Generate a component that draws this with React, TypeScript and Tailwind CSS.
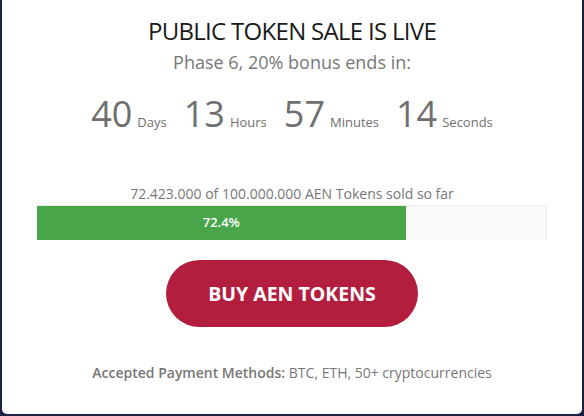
export default function App() {
  const units = [
    { value: "40", label: "Days" },
    { value: "13", label: "Hours" },
    { value: "57", label: "Minutes" },
    { value: "14", label: "Seconds" },
  ];
  const percent = 72.4;

  return (
    <div className="h-[416px] w-[584px] bg-[#1d2045] pl-[2px] pr-[2px] pb-[2px] font-['Open_Sans',sans-serif]">
      <div className="flex h-full flex-col items-center rounded-b-[5px] bg-white pt-[16px]">
        <h1 className="text-[24px] leading-[30px] font-normal tracking-[-0.7px] text-[#1a1a1a]">
          PUBLIC TOKEN SALE IS LIVE
        </h1>
        <p className="mt-[4px] text-[18px] leading-[24px] text-[#777]">
          Phase 6, 20% bonus ends in:
        </p>

        <div className="mt-[18px] flex items-baseline gap-[17px] text-[#6f6f6f]">
          {units.map((u) => (
            <div key={u.label} className="flex items-baseline gap-[5px]">
              <span className="text-[36px] leading-[44px]">{u.value}</span>
              <span className="text-[13px]">{u.label}</span>
            </div>
          ))}
        </div>

        <p className="mt-[48px] text-[14px] leading-[20px] text-[#777]">
          72.423.000 of 100.000.000 AEN Tokens sold so far
        </p>
        <div className="mt-[1px] h-[35px] w-[510px] border-t border-r border-[#ededed] bg-[#f9f9f9]">
          <div
            className="flex h-full items-center justify-center bg-[#48a54a] text-[13px] font-semibold text-white"
            style={{ width: `${percent}%` }}
          >
            72.4%
          </div>
        </div>

        <button className="mt-[20px] h-[67px] w-[252px] rounded-full bg-[#b31e3f] text-[19.5px] font-bold text-white">
          BUY AEN TOKENS
        </button>

        <p className="mt-[36px] text-[14px] leading-[20px] text-[#777]">
          <span className="font-semibold">Accepted Payment Methods:</span> BTC, ETH, 50+ cryptocurrencies
        </p>
      </div>
    </div>
  );
}
